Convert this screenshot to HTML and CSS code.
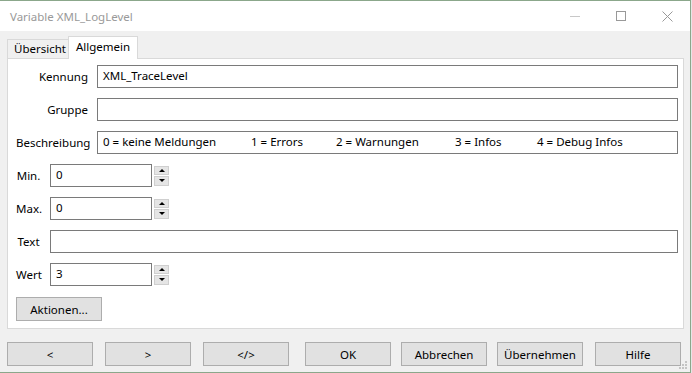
FILE: index.html
```html
<!DOCTYPE html>
<html>
<head>
  <title>Variable XML_LogLevel</title>
  <link rel="stylesheet" href="styles.css">
</head>
<body>
  <div class="window">
    <div class="titlebar">
      <span class="title">Variable XML_LogLevel</span>
      <div class="caption-buttons">
        <div class="cap">
          <svg width="10" height="10" viewBox="0 0 10 10"><line x1="0" y1="5.5" x2="10" y2="5.5" stroke="#c8c8c8" stroke-width="1"/></svg>
        </div>
        <div class="cap">
          <svg width="10" height="10" viewBox="0 0 10 10"><rect x="0.5" y="0.5" width="9" height="9" fill="none" stroke="#999" stroke-width="1"/></svg>
        </div>
        <div class="cap">
          <svg width="11" height="11" viewBox="0 0 11 11"><path d="M0.5 0.5 L10.5 10.5 M10.5 0.5 L0.5 10.5" stroke="#999" stroke-width="1" fill="none"/></svg>
        </div>
      </div>
    </div>

    <div class="client">
      <div class="tabs">
        <div class="tab tab-first">Übersicht</div>
        <div class="tab active">Allgemein</div>
      </div>

      <div class="panel">
        <div class="row">
          <label class="lbl-wide">Kennung</label>
          <div class="field wide">XML_TraceLevel</div>
        </div>
        <div class="row">
          <label class="lbl-wide">Gruppe</label>
          <div class="field wide"></div>
        </div>
        <div class="row">
          <label class="lbl-wide">Beschreibung</label>
          <div class="field wide desc">
            <span>0 = keine Meldungen</span>
            <span>1 = Errors</span>
            <span>2 = Warnungen</span>
            <span>3 = Infos</span>
            <span>4 = Debug Infos</span>
          </div>
        </div>
        <div class="row">
          <label class="lbl-narrow">Min.</label>
          <div class="field small">0</div>
          <div class="spin"><div class="spin-btn up"></div><div class="spin-btn down"></div></div>
        </div>
        <div class="row">
          <label class="lbl-narrow">Max.</label>
          <div class="field small">0</div>
          <div class="spin"><div class="spin-btn up"></div><div class="spin-btn down"></div></div>
        </div>
        <div class="row">
          <label class="lbl-narrow">Text</label>
          <div class="field wide"></div>
        </div>
        <div class="row">
          <label class="lbl-narrow">Wert</label>
          <div class="field small">3</div>
          <div class="spin"><div class="spin-btn up"></div><div class="spin-btn down"></div></div>
        </div>
        <button class="btn actions">Aktionen...</button>
      </div>

      <div class="footer">
        <button class="btn">&lt;</button>
        <button class="btn">&gt;</button>
        <button class="btn">&lt;/&gt;</button>
        <button class="btn btn-ok">OK</button>
        <button class="btn btn-tight">Abbrechen</button>
        <button class="btn btn-tight">Übernehmen</button>
        <button class="btn">Hilfe</button>
      </div>
    </div>

    <svg class="grip" width="9" height="9" viewBox="0 0 9 9">
      <rect x="6" y="0" width="2" height="2" fill="#c4c4c4"/>
      <rect x="3" y="3" width="2" height="2" fill="#c4c4c4"/>
      <rect x="6" y="3" width="2" height="2" fill="#c4c4c4"/>
      <rect x="0" y="6" width="2" height="2" fill="#c4c4c4"/>
      <rect x="3" y="6" width="2" height="2" fill="#c4c4c4"/>
      <rect x="6" y="6" width="2" height="2" fill="#c4c4c4"/>
    </svg>
  </div>
</body>
</html>
```

FILE: styles.css
```css
:root {
  --bg-window: #f0f0f0;
  --frame: #8ba78b;
  --tab-border: #d9d9d9;
  --field-border: #7a7a7a;
  --btn-bg: #e1e1e1;
  --btn-border: #adadad;
}

* {
  margin: 0;
  padding: 0;
  box-sizing: border-box;
  font-family: "Segoe UI", "Noto Sans", sans-serif;
}

body {
  width: 692px;
  height: 373px;
  background: #e6e6e6;
  font-size: 11.5px;
  color: #000;
}

.window {
  position: relative;
  width: 691px;
  height: 373px;
  border-top: 1px solid var(--frame);
  border-right: 1px solid var(--frame);
  border-bottom: 1px solid var(--frame);
  background: var(--bg-window);
  display: flex;
  flex-direction: column;
}

.titlebar {
  height: 30px;
  background: #fff;
  display: flex;
  align-items: center;
}

.title {
  padding-left: 10px;
  color: #999;
  font-size: 11.5px;
}

.caption-buttons {
  margin-left: auto;
  display: flex;
}

.cap {
  width: 46px;
  height: 30px;
  display: flex;
  align-items: center;
  justify-content: center;
}

.client {
  flex: 1;
  padding: 5px 6px 0 7px;
}

.tabs {
  display: flex;
  align-items: flex-end;
  height: 22px;
}

.tab {
  height: 19px;
  border: 1px solid var(--tab-border);
  border-bottom: none;
  background: var(--bg-window);
  padding-left: 6px;
  line-height: 17px;
  white-space: nowrap;
}

.tab-first {
  width: 62px;
}

.tab.active {
  position: relative;
  z-index: 1;
  width: 70px;
  height: 23px;
  margin-left: -1px;
  margin-bottom: -1px;
  padding-left: 7px;
  background: #fff;
  line-height: 20px;
}

.panel {
  width: 677px;
  height: 271px;
  background: #fff;
  border: 1px solid var(--tab-border);
  padding: 6px 5px 7px 8px;
  display: flex;
  flex-direction: column;
  gap: 10px;
}

.row {
  display: flex;
  align-items: center;
  height: 23px;
}

.lbl-wide {
  width: 72px;
  margin-right: 9px;
  text-align: right;
  white-space: nowrap;
}

.lbl-narrow {
  width: 25px;
  margin-right: 9px;
  text-align: center;
}

.field {
  height: 23px;
  border: 1px solid var(--field-border);
  padding: 0 5px;
  line-height: 20px;
  white-space: nowrap;
}

.field.wide {
  flex: 1;
}

.field.small {
  width: 102px;
}

.desc {
  display: grid;
  grid-template-columns: 148px 85px 119px 82px auto;
}

.spin {
  margin-left: 2px;
  width: 15px;
  height: 20px;
  display: flex;
  flex-direction: column;
  gap: 1px;
}

.spin-btn {
  flex: 1;
  background: #e5e5e5;
  border: 1px solid #cfcfcf;
  display: flex;
  align-items: center;
  justify-content: center;
}

.spin-btn.up::before {
  content: '';
  border-left: 3px solid transparent;
  border-right: 3px solid transparent;
  border-bottom: 3px solid #000;
}

.spin-btn.down::before {
  content: '';
  border-left: 3px solid transparent;
  border-right: 3px solid transparent;
  border-top: 3px solid #000;
}

.btn {
  width: 86px;
  height: 24px;
  background: var(--btn-bg);
  border: 1px solid var(--btn-border);
  font-size: 11.5px;
  color: #000;
}

.actions {
  margin-top: 1px;
}

.footer {
  margin-top: 13px;
  display: flex;
  gap: 12px;
}

.btn-ok {
  margin-left: 4px;
}

.btn-tight {
  margin-left: -2px;
}

.grip {
  position: absolute;
  right: 2px;
  bottom: 2px;
}
```
